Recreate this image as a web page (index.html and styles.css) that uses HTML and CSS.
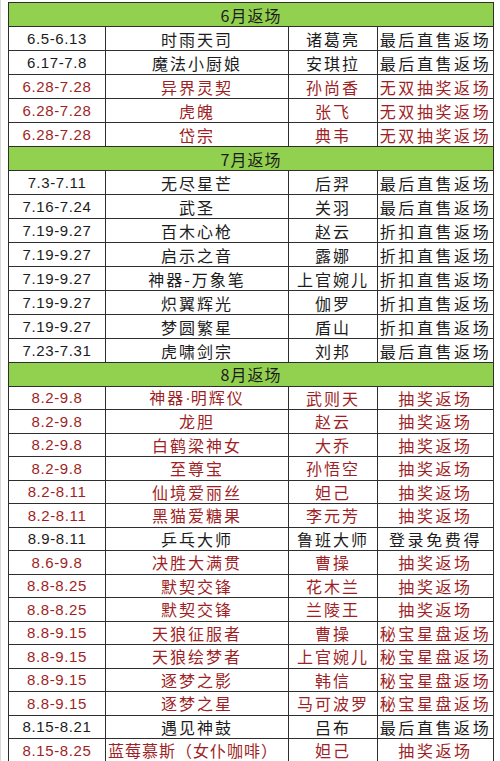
FILE: index.html
```html
<!DOCTYPE html>
<html lang="zh">
<head>
<meta charset="utf-8">
<title>返场时间表</title>
<link rel="stylesheet" href="styles.css">
</head>
<body>
<div class="page">
<table class="sheet">
  <colgroup>
    <col class="c-date"><col class="c-skin"><col class="c-hero"><col class="c-way">
  </colgroup>
  <tbody class="sec sec-6">
    <tr class="head"><td colspan="4">6月返场</td></tr>
    <tr><td class="date">6.5-6.13</td><td>时雨天司</td><td>诸葛亮</td><td class="way">最后直售返场</td></tr>
    <tr><td class="date">6.17-7.8</td><td>魔法小厨娘</td><td>安琪拉</td><td class="way">最后直售返场</td></tr>
    <tr class="red"><td class="date">6.28-7.28</td><td>异界灵契</td><td>孙尚香</td><td class="way">无双抽奖返场</td></tr>
    <tr class="red"><td class="date">6.28-7.28</td><td>虎魄</td><td>张飞</td><td class="way">无双抽奖返场</td></tr>
    <tr class="red"><td class="date">6.28-7.28</td><td>岱宗</td><td>典韦</td><td class="way">无双抽奖返场</td></tr>
  </tbody>
  <tbody class="sec sec-7">
    <tr class="head"><td colspan="4">7月返场</td></tr>
    <tr><td class="date">7.3-7.11</td><td>无尽星芒</td><td>后羿</td><td class="way">最后直售返场</td></tr>
    <tr><td class="date">7.16-7.24</td><td>武圣</td><td>关羽</td><td class="way">最后直售返场</td></tr>
    <tr><td class="date">7.19-9.27</td><td>百木心枪</td><td>赵云</td><td class="way">折扣直售返场</td></tr>
    <tr><td class="date">7.19-9.27</td><td>启示之音</td><td>露娜</td><td class="way">折扣直售返场</td></tr>
    <tr><td class="date">7.19-9.27</td><td>神器-万象笔</td><td>上官婉儿</td><td class="way">折扣直售返场</td></tr>
    <tr><td class="date">7.19-9.27</td><td>炽翼辉光</td><td>伽罗</td><td class="way">折扣直售返场</td></tr>
    <tr><td class="date">7.19-9.27</td><td>梦圆繁星</td><td>盾山</td><td class="way">折扣直售返场</td></tr>
    <tr><td class="date">7.23-7.31</td><td>虎啸剑宗</td><td>刘邦</td><td class="way">最后直售返场</td></tr>
  </tbody>
  <tbody class="sec sec-8">
    <tr class="head"><td colspan="4">8月返场</td></tr>
    <tr class="red"><td class="date">8.2-9.8</td><td>神器<span class="dot">·</span>明辉仪</td><td>武则天</td><td class="way">抽奖返场</td></tr>
    <tr class="red"><td class="date">8.2-9.8</td><td>龙胆</td><td>赵云</td><td class="way">抽奖返场</td></tr>
    <tr class="red"><td class="date">8.2-9.8</td><td>白鹤梁神女</td><td>大乔</td><td class="way">抽奖返场</td></tr>
    <tr class="red"><td class="date">8.2-9.8</td><td>至尊宝</td><td>孙悟空</td><td class="way">抽奖返场</td></tr>
    <tr class="red"><td class="date">8.2-8.11</td><td>仙境爱丽丝</td><td>妲己</td><td class="way">抽奖返场</td></tr>
    <tr class="red"><td class="date">8.2-8.11</td><td>黑猫爱糖果</td><td>李元芳</td><td class="way">抽奖返场</td></tr>
    <tr><td class="date">8.9-8.11</td><td>乒乓大师</td><td>鲁班大师</td><td class="way">登录免费得</td></tr>
    <tr class="red"><td class="date">8.6-9.8</td><td>决胜大满贯</td><td>曹操</td><td class="way">抽奖返场</td></tr>
    <tr class="red"><td class="date">8.8-8.25</td><td>默契交锋</td><td>花木兰</td><td class="way">抽奖返场</td></tr>
    <tr class="red"><td class="date">8.8-8.25</td><td>默契交锋</td><td>兰陵王</td><td class="way">抽奖返场</td></tr>
    <tr class="red"><td class="date">8.8-9.15</td><td>天狼征服者</td><td>曹操</td><td class="way">秘宝星盘返场</td></tr>
    <tr class="red"><td class="date">8.8-9.15</td><td>天狼绘梦者</td><td>上官婉儿</td><td class="way">秘宝星盘返场</td></tr>
    <tr class="red"><td class="date">8.8-9.15</td><td>逐梦之影</td><td>韩信</td><td class="way">秘宝星盘返场</td></tr>
    <tr class="red"><td class="date">8.8-9.15</td><td>逐梦之星</td><td>马可波罗</td><td class="way">秘宝星盘返场</td></tr>
    <tr><td class="date">8.15-8.21</td><td>遇见神鼓</td><td>吕布</td><td class="way">最后直售返场</td></tr>
    <tr class="red"><td class="date">8.15-8.25</td><td class="tight">蓝莓慕斯（女仆咖啡）</td><td>妲己</td><td class="way">抽奖返场</td></tr>
  </tbody>
</table>
</div>
</body>
</html>
```

FILE: styles.css
```css
html, body {
  margin: 0;
  padding: 0;
  background: #ffffff;
}

.page {
  width: 500px;
  height: 761px;
  overflow: hidden;
  padding: 2px 0 0 7px;
  box-sizing: border-box;
  border-left: 1px solid #d8d8d8;
}

.sheet {
  border-collapse: collapse;
  table-layout: fixed;
  width: 485px;
  font-family: "Noto Sans CJK SC", "Noto Sans", sans-serif;
  font-size: 16px;
  color: #1c1c1c;
}

.c-date { width: 97px; }
.c-skin { width: 183px; }
.c-hero { width: 89px; }
.c-way { width: 116px; }

.sheet td {
  border: 1px solid #2e2e2e;
  padding: 0;
  text-align: center;
  vertical-align: middle;
  white-space: nowrap;
  overflow: hidden;
  letter-spacing: 2px;
  line-height: 1;
}

.sec-6 tr, .sec-7 tr { height: 24px; }
.sec-8 tr { height: 23.5px; }

.head td {
  background: #92d050;
  color: #1c1c1c;
  letter-spacing: 1px;
}

.sheet td.date {
  font-family: "Liberation Sans", "Noto Sans", sans-serif;
  font-size: 15px;
  letter-spacing: 0.6px;
}

.sheet td.way {
  letter-spacing: 2.6px;
}

.sheet td.tight {
  letter-spacing: 1px;
  text-align: left;
  padding-left: 2px;
}

.dot {
  font-family: "Liberation Sans", sans-serif;
  letter-spacing: 0;
}

.red td {
  color: #9e1f26;
}
```
